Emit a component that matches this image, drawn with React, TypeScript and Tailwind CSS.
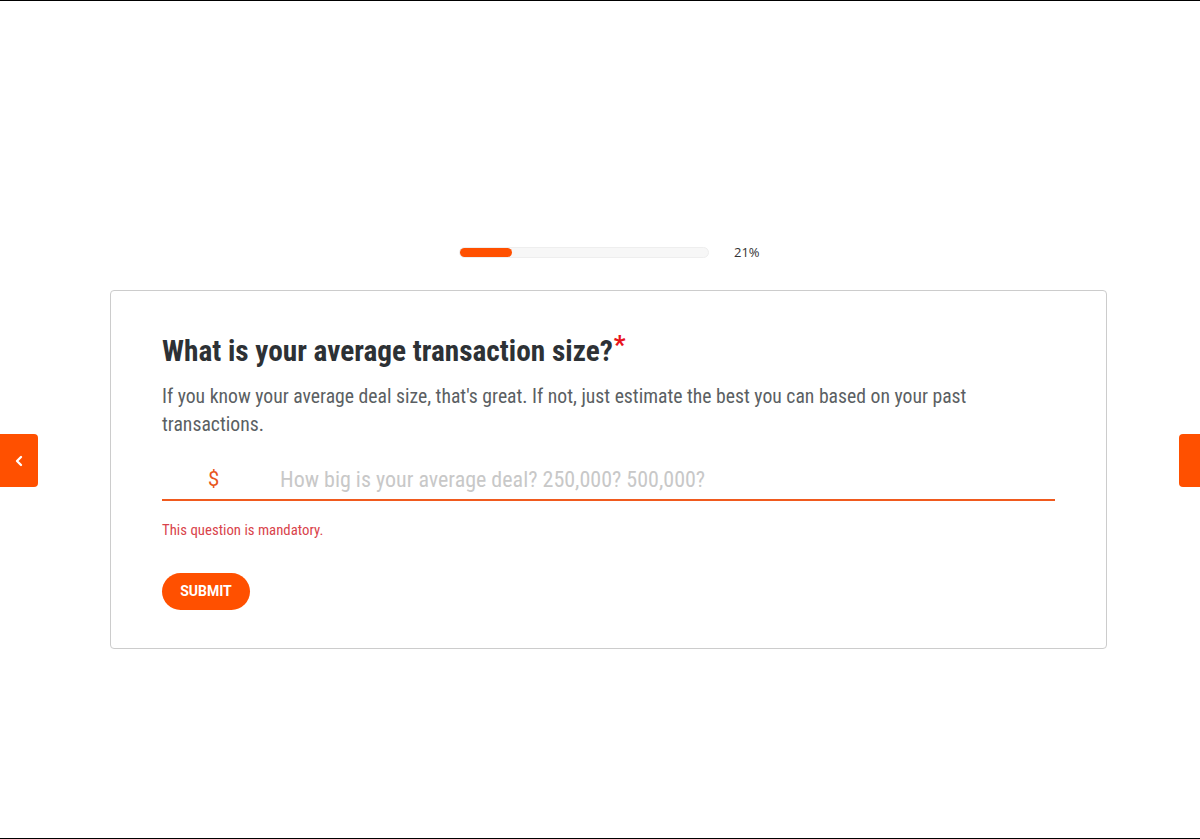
import { ChevronLeft } from "lucide-react";

export default function App() {
  return (
    <div className="relative flex h-[839px] w-full flex-col border-y border-black bg-white font-['Roboto',sans-serif]">
      {/* side nav buttons */}
      <button className="absolute left-0 top-[433px] flex h-[53px] w-[38px] items-center justify-center rounded-r-[4px] bg-[#ff5000] text-white">
        <ChevronLeft size={16} strokeWidth={3.5} />
      </button>
      <button className="absolute right-0 top-[433px] h-[53px] w-[21px] rounded-l-[4px] bg-[#ff5000]" />

      <div className="ml-[459px] mt-[246px] flex items-center gap-[25px]">
        <div className="h-[11px] w-[250px] rounded-full border border-[#eeeeee] bg-[#f7f7f7]">
          <div className="h-full w-[21%] rounded-full bg-[#ff5000]" />
        </div>
        <span className="font-['Open_Sans',sans-serif] text-[13px] leading-[11px] text-[#333]">21%</span>
      </div>

      <div className="ml-[110px] mt-[32px] w-[997px] rounded-[4px] border border-[#cccccc] px-[51px] pb-[38px] pt-[42px]">
        <h1 className="text-[29.3px] font-bold leading-[36px] text-[#2d3135] [font-stretch:condensed]">
          What is your average transaction size?
          <span className="relative top-[-7px] ml-[1px] text-[26px] leading-[0] text-[#e8131b]">*</span>
        </h1>
        <p className="mt-[14px] text-[19.7px] leading-[28px] text-[#5b5f63] [font-stretch:condensed]">
          If you know your average deal size, that's great. If not, just estimate the best you can based on your past transactions.
        </p>
        <div className="mt-[20px] flex h-[42px] items-center border-b-2 border-[#f05a1e]">
          <span className="w-[118px] pl-[46px] text-[20px] text-[#e8561b]">$</span>
          <input
            placeholder="How big is your average deal? 250,000? 500,000?"
            className="flex-1 bg-transparent text-[22px] text-[#333] outline-none placeholder:text-[#c8c8c8] [font-stretch:condensed]"
          />
        </div>
        <p className="mt-[20px] text-[14.8px] leading-[18px] text-[#d9434b] [font-stretch:condensed]">
          This question is mandatory.
        </p>
        <button className="mt-[34px] h-[37px] w-[88px] rounded-full bg-[#ff5000] text-[14px] font-bold text-white">
          SUBMIT
        </button>
      </div>
    </div>
  );
}
